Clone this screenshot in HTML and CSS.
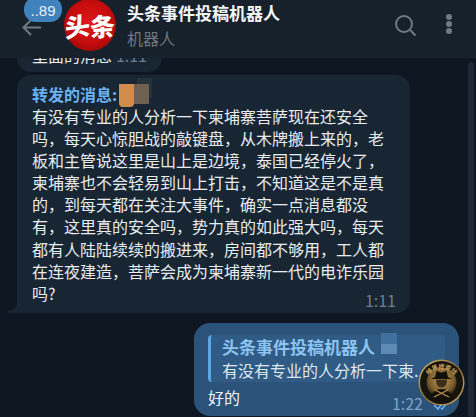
FILE: index.html
```html
<!DOCTYPE html>
<html lang="zh">
<head>
  <meta charset="UTF-8" />
  <title>头条事件投稿机器人</title>
  <link rel="stylesheet" href="styles.css">
</head>
<body>
  <div class="chat">
    <header class="topbar">
      <div class="back">
        <svg width="20" height="17" viewBox="0 0 20 17"><path d="M19 8.500H2M9 1L1.500 8.500 9 16" fill="none" stroke="#6f7a85" stroke-width="2"/></svg>
        <span class="unread">..89</span>
      </div>
      <div class="avatar"><span class="logo-a">头</span><span class="logo-b">条</span></div>
      <div class="peer">
        <div class="peer-name">头条事件投稿机器人</div>
        <div class="peer-sub">机器人</div>
      </div>
      <svg class="icon-search" width="24" height="24" viewBox="0 0 24 24"><circle cx="10" cy="10" r="8" fill="none" stroke="#6f7a85" stroke-width="2"/><path d="M16 16l5.500 5.500" stroke="#6f7a85" stroke-width="2"/></svg>
      <div class="dots"><i></i><i></i><i></i></div>
    </header>

    <main class="messages">
      <div class="bubble prev">
        <div class="cut"><span>里面的消息</span><span class="prev-time">1:11</span></div>
      </div>

      <div class="bubble incoming">
        <div class="fwd">转发的消息:<span class="blur-a"></span><span class="blur-b"></span></div>
        <p class="text">有没有专业的人分析一下柬埔寨菩萨现在还安全吗，每天心惊胆战的敲键盘，从木牌搬上来的，老板和主管说这里是山上是边境，泰国已经停火了，柬埔寨也不会轻易到山上打击，不知道这是不是真的，到每天都在关注大事件，确实一点消息都没有，这里真的安全吗，势力真的如此强大吗，每天都有人陆陆续续的搬进来，房间都不够用，工人都在连夜建造，菩萨会成为柬埔寨新一代的电诈乐园吗?</p>
        <span class="time">1:11</span>
      </div>

      <div class="bubble outgoing">
        <div class="reply">
          <div class="reply-name">头条事件投稿机器人<span class="blur-c"></span></div>
          <div class="reply-text">有没有专业的人分析一下柬...</div>
        </div>
        <div class="out-row">
          <span>好的</span>
          <span class="out-time">1:22</span>
          <svg class="checks" width="18" height="12" viewBox="0 0 18 12"><path d="M1 6l4 4 6-8M8 9l1 1 7-8" fill="none" stroke="#6ab2f2" stroke-width="1.600"/></svg>
        </div>
      </div>
    </main>

    <div class="scrollbar"></div>
    <div class="badge">
      <svg width="47" height="47" viewBox="0 0 47 47">
        <defs>
          <linearGradient id="gold" x1="0" y1="0" x2="1" y2="1">
            <stop offset="0" stop-color="#e0bd72"/>
            <stop offset="0.5" stop-color="#8a6a32"/>
            <stop offset="1" stop-color="#d6b06a"/>
          </linearGradient>
          <radialGradient id="face" cx="0.5" cy="0.4" r="0.6">
            <stop offset="0" stop-color="#c39a55"/>
            <stop offset="0.7" stop-color="#7a5c2c"/>
            <stop offset="1" stop-color="#2e2416"/>
          </radialGradient>
          <path id="arc" d="M8 25a15.500 15.500 0 0 1 31 0"/>
        </defs>
        <circle cx="23.500" cy="23.500" r="23" fill="url(#gold)"/>
        <circle cx="23.500" cy="23.500" r="21.500" fill="#17130d"/>
        <circle cx="23.500" cy="23.500" r="15" fill="url(#face)"/>
        <text class="badge-text"><textPath href="#arc" startOffset="50%" text-anchor="middle">暗黑搜查线</textPath></text>
        <path d="M13 20h21l-4-2-1.500-6-5 1.500-5-1.500-1.500 6z" fill="#14100a"/>
        <path d="M18 20.500h11c0 5-2 8-5.500 8s-5.500-3-5.500-8z" fill="#3a2d1a"/>
        <path d="M12 41c1-7 5-11 11.500-11S34 34 35 41c-3 3-8 4-11.500 4S15 44 12 41z" fill="#14100a"/>
        <path d="M16 38l14-7M31 38l-14-7" stroke="#b8924e" stroke-width="1.300"/>
      </svg>
    </div>
  </div>
</body>
</html>
```

FILE: styles.css
```css
* {
  box-sizing: border-box;
}

html, body {
  margin: 0;
  height: 100%;
}

body {
  font-family: "Noto Sans CJK SC", "Liberation Sans", sans-serif;
  background-color: #0e1621;
  color: #e9edf0;
  overflow: hidden;
}

.chat {
  position: relative;
  width: 476px;
  height: 417px;
  overflow: hidden;
}

.topbar {
  position: relative;
  z-index: 2;
  display: flex;
  align-items: flex-start;
  height: 58px;
  padding-left: 22px;
  background-color: #17212b;
}

.back {
  position: relative;
  width: 42px;
  height: 58px;
  padding-top: 17px;
}

.unread {
  position: absolute;
  left: 2px;
  top: -3px;
  width: 38px;
  height: 25px;
  padding-top: 4px;
  border-radius: 12px;
  background-color: #4082bc;
  color: #e8f1f8;
  font-family: "Liberation Sans", sans-serif;
  font-size: 15px;
  line-height: 20px;
  text-align: center;
}

.avatar {
  display: flex;
  align-items: center;
  justify-content: center;
  flex: none;
  width: 52px;
  height: 52px;
  margin-top: -1px;
  border-radius: 50%;
  background: radial-gradient(circle at 50% 45%, #e01818 0%, #c40c0c 55%, #7c0303 100%);
  color: #fff;
  font-size: 25px;
  font-weight: 900;
  line-height: 30px;
}

.logo-a {
  transform: skewY(-8deg);
}

.logo-b {
  transform: skewY(-3deg);
}

.peer {
  flex: 1;
  padding-left: 11px;
}

.peer-name {
  margin-top: 2px;
  font-size: 17px;
  font-weight: bold;
  line-height: 22px;
  color: #f4f6f8;
}

.peer-sub {
  margin-top: 3px;
  font-size: 16px;
  line-height: 22px;
  color: #6d7883;
}

.icon-search {
  margin-top: 14px;
  margin-right: 28px;
}

.dots {
  display: flex;
  flex-direction: column;
  gap: 1px;
  margin-top: 14px;
  margin-right: 24px;
}

.dots i {
  width: 6px;
  height: 6px;
  border-radius: 50%;
  background-color: #6f7a85;
}

.messages {
  padding-left: 17px;
}

.bubble {
  position: relative;
  border-radius: 14px;
  background-color: #182533;
}

.prev {
  display: flow-root;
  width: 145px;
  height: 14px;
  border-radius: 0 0 14px 14px;
}

.cut {
  display: flex;
  justify-content: space-between;
  margin-top: -14px;
  padding: 0 15px;
  font-size: 16px;
  line-height: 22px;
}

.prev-time {
  color: #6d7f8f;
}

.incoming {
  width: 393px;
  margin-top: 3px;
  padding: 9px 14px 9px 15px;
  border-bottom-left-radius: 0;
}

.incoming::before {
  content: "";
  position: absolute;
  left: -9px;
  bottom: 0;
  width: 9px;
  height: 12px;
  background: radial-gradient(circle at 0 0, transparent 9px, #182533 10px);
}

.fwd {
  display: flex;
  height: 21px;
  font-size: 16px;
  font-weight: bold;
  line-height: 21px;
  color: #6ab2f2;
}

.blur-a {
  width: 15px;
  height: 23px;
  margin-left: 2px;
  border-radius: 0 0 4px 4px;
  background-color: #d18c4b;
}

.blur-b {
  width: 15px;
  height: 20px;
  background-color: #6f6052;
  box-shadow: 3px -6px 0 #27313c;
}

.text {
  width: 362px;
  margin: 0;
  font-size: 16px;
  line-height: 22.100px;
  color: #e9edf0;
}

.time {
  position: absolute;
  right: 14px;
  bottom: 2px;
  font-size: 16px;
  line-height: 22px;
  color: #6d7f8f;
}

.outgoing {
  width: 265px;
  height: 93px;
  margin-top: 10px;
  margin-left: 177px;
  padding: 12px 14px 0 14px;
  border-radius: 16px;
  background-color: #2b5278;
}

.reply {
  height: 47px;
  padding: 0 0 0 11px;
  border-left: 3px solid #5aa7e3;
  border-radius: 4px;
  background-color: #2f5b85;
}

.reply-name {
  display: flex;
  font-size: 17px;
  font-weight: bold;
  line-height: 24px;
  color: #8cc4f2;
}

.blur-c {
  width: 16px;
  height: 21px;
  margin-top: -2px;
  margin-left: 6px;
  background: linear-gradient(#3f709f 52%, #5c8ab5 52%);
}

.reply-text {
  font-size: 16px;
  line-height: 22px;
  color: #dfe8f0;
  white-space: nowrap;
  overflow: hidden;
}

.out-row {
  display: flex;
  align-items: flex-end;
  height: 24px;
  margin-top: 2px;
  font-size: 16px;
  line-height: 22px;
  color: #f1f5f8;
}

.out-time {
  margin-left: auto;
  margin-right: 10px;
  margin-bottom: -6px;
  color: #7ea3c6;
}

.checks {
  margin-right: -6px;
  margin-bottom: -3px;
}

.scrollbar {
  position: absolute;
  right: 2px;
  top: 62px;
  width: 6px;
  height: 355px;
  border-radius: 3px;
  background-color: #1e2a36;
}

.badge {
  position: absolute;
  left: 418px;
  top: 359px;
  width: 47px;
  height: 47px;
}

.badge-text {
  font-size: 6px;
  font-weight: bold;
  fill: #c9a45c;
}
```
